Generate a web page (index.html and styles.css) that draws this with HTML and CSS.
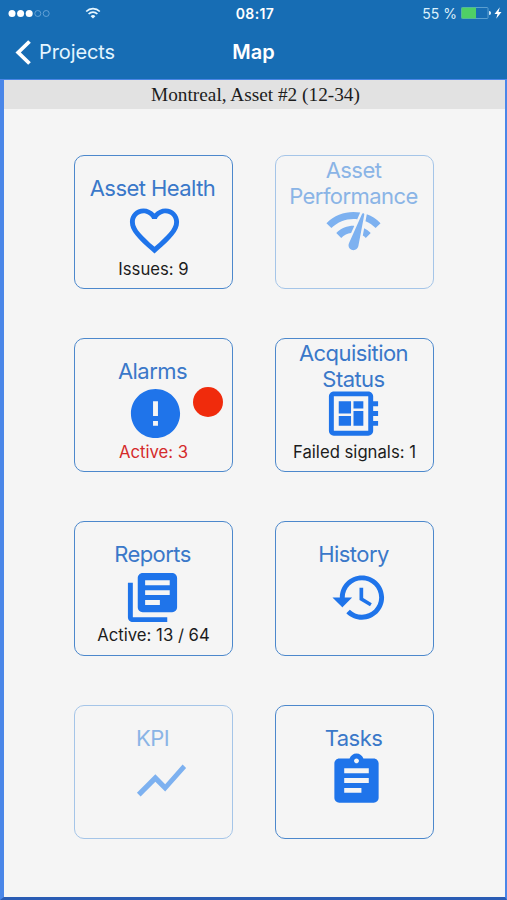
FILE: index.html
```html
<!DOCTYPE html>
<html lang="en">
<head>
    <meta charset="UTF-8">
    <meta name="viewport" content="width=device-width, initial-scale=1.0">
    <title>Map</title>
    <link rel="stylesheet" href="styles.css">
</head>
<body>
    <header>
        <div class="status-bar">
            <div class="status-left">
                <svg class="signal" viewBox="0 0 42 9" width="42" height="9">
                    <circle cx="4" cy="4.5" r="3.5" fill="#fff"/>
                    <circle cx="12.6" cy="4.5" r="3.5" fill="#fff"/>
                    <circle cx="21.2" cy="4.5" r="3.5" fill="#fff"/>
                    <circle cx="29.8" cy="4.5" r="3" fill="none" stroke="#6ba6d8" stroke-width="0.9"/>
                    <circle cx="38.2" cy="4.5" r="3" fill="none" stroke="#6ba6d8" stroke-width="0.9"/>
                </svg>
                <svg class="wifi" viewBox="0 0 16 12" width="16" height="12">
                    <path d="M1.2 4.5a9.6 9.6 0 0 1 13.6 0M3.6 7a6.2 6.2 0 0 1 8.8 0" fill="none" stroke="#e6f6ff" stroke-width="1.7"/>
                    <path d="M8 11.6L5.6 9.2a3.4 3.4 0 0 1 4.8 0z" fill="#e6f6ff"/>
                </svg>
            </div>
            <div class="clock">08:17</div>
            <div class="status-right">
                <span class="percent">55 %</span>
                <svg viewBox="0 0 42 14" width="42" height="14">
                    <rect x="0.5" y="1.5" width="26.5" height="11" rx="1" fill="none" stroke="#5b9fd0"/>
                    <rect x="0.5" y="1.5" width="14.5" height="11" fill="#4fcf66"/>
                    <path d="M28 5c1.6 0 2 1 2 2s-.4 2-2 2z" fill="#cfe6f7"/>
                    <path d="M38.8 1.2l-5.3 6.7h3l-1.3 4.9 5.3-6.9h-3z" fill="#fff"/>
                </svg>
            </div>
        </div>
        <div class="navbar">
            <a class="back">
                <svg viewBox="0 0 16 25" width="16" height="25">
                    <path d="M14.5 1.5L3.2 12.5l11.3 11" fill="none" stroke="#fff" stroke-width="3.8"/>
                </svg>
                <span>Projects</span>
            </a>
            <h1>Map</h1>
        </div>
    </header>

    <main>
        <div class="asset-name">Montreal, Asset #2 (12-34)</div>

        <div class="tiles">
            <a class="tile">
                <div class="title">Asset Health</div>
                <svg class="icon icon-health" viewBox="0 0 24 24"><path d="M16.5 3c-1.74 0-3.41.81-4.5 2.09C10.91 3.81 9.24 3 7.5 3 4.42 3 2 5.42 2 8.5c0 3.78 3.4 6.86 8.55 11.54L12 21.35l1.45-1.32C18.6 15.36 22 12.28 22 8.5 22 5.42 19.58 3 16.5 3zm-4.4 15.55l-.1.1-.1-.1C7.14 14.24 4 11.39 4 8.5 4 6.5 5.5 5 7.5 5c1.54 0 3.04.99 3.57 2.36h1.87C13.46 5.99 14.96 5 16.5 5c2 0 3.5 1.5 3.5 3.5 0 2.89-3.14 5.74-7.9 10.05z"/></svg>
                <div class="info">Issues: 9</div>
            </a>

            <a class="tile disabled">
                <div class="title two-lines">Asset<br>Performance</div>
                <svg class="icon icon-performance" viewBox="0 0 24 24"><path d="M15.9 5c-.17 0-.32.09-.41.23l-.07.15-5.18 11.65c-.16.29-.26.61-.26.96 0 1.11.9 2.01 2.01 2.01.96 0 1.77-.68 1.96-1.59l.01-.03L16.4 5.5c0-.28-.22-.5-.5-.5zM1 9l2 2c2.88-2.88 6.79-4.08 10.53-3.62l1.19-2.68C9.89 3.84 4.74 5.27 1 9zm20 2l2-2c-1.64-1.64-3.55-2.82-5.59-3.57l-.53 2.82c1.5.62 2.9 1.53 4.12 2.75zm-4 4l2-2c-.8-.8-1.7-1.42-2.66-1.89l-.55 2.92c.42.27.83.59 1.21.97zM5 13l2 2c1.13-1.13 2.56-1.79 4.03-2l1.28-2.88c-2.63-.08-5.3.87-7.31 2.88z"/></svg>
            </a>

            <a class="tile">
                <div class="title">Alarms</div>
                <svg class="icon icon-alarms" viewBox="0 0 24 24"><path d="M12 2C6.48 2 2 6.48 2 12s4.48 10 10 10 10-4.48 10-10S17.52 2 12 2zm1 15h-2v-2h2v2zm0-4h-2V7h2v6z"/></svg>
                <div class="info alert">Active: 3</div>
                <span class="badge"></span>
            </a>

            <a class="tile">
                <div class="title two-lines">Acquisition<br>Status</div>
                <svg class="icon icon-status" viewBox="0 0 24 24"><path d="M22 9V7h-2V5c0-1.1-.9-2-2-2H4c-1.1 0-2 .9-2 2v14c0 1.1.9 2 2 2h14c1.1 0 2-.9 2-2v-2h2v-2h-2v-2h2v-2h-2V9h2zm-4 10H4V5h14v14zM6 13h5v4H6zm6-6h4v3h-4zM6 7h5v5H6zm6 4h4v6h-4z"/></svg>
                <div class="info">Failed signals: 1</div>
            </a>

            <a class="tile">
                <div class="title">Reports</div>
                <svg class="icon icon-reports" viewBox="0 0 24 24"><path d="M4 6H2v14c0 1.1.9 2 2 2h14v-2H4V6zm16-4H8c-1.1 0-2 .9-2 2v12c0 1.1.9 2 2 2h12c1.1 0 2-.9 2-2V4c0-1.1-.9-2-2-2zm-1 9H9V9h10v2zm-4 4H9v-2h6v2zm4-8H9V5h10v2z"/></svg>
                <div class="info">Active: 13 / 64</div>
            </a>

            <a class="tile">
                <div class="title">History</div>
                <svg class="icon icon-history" viewBox="0 0 24 24"><path d="M13 3c-4.97 0-9 4.03-9 9H1l3.89 3.89.07.14L9 12H6c0-3.87 3.13-7 7-7s7 3.13 7 7-3.13 7-7 7c-1.93 0-3.68-.79-4.94-2.06l-1.42 1.42C8.27 19.99 10.51 21 13 21c4.97 0 9-4.03 9-9s-4.03-9-9-9zm-1 5v5l4.28 2.54.72-1.21-3.5-2.08V8H12z"/></svg>
            </a>

            <a class="tile disabled">
                <div class="title">KPI</div>
                <svg class="icon icon-kpi" viewBox="0 0 24 24"><path d="M3.5 18.49l6-6.01 4 4L22 6.92l-1.41-1.41-7.09 7.97-4-4L2 16.99z"/></svg>
            </a>

            <a class="tile">
                <div class="title">Tasks</div>
                <svg class="icon icon-tasks" viewBox="0 0 24 24"><path d="M19 3h-4.18C14.4 1.84 13.3 1 12 1c-1.3 0-2.4.84-2.82 2H5c-1.1 0-2 .9-2 2v14c0 1.1.9 2 2 2h14c1.1 0 2-.9 2-2V5c0-1.1-.9-2-2-2zm-7 0c.55 0 1 .45 1 1s-.45 1-1 1-1-.45-1-1 .45-1 1-1zm2 14H7v-2h7v2zm3-4H7v-2h10v2zm0-4H7V7h10v2z"/></svg>
            </a>
        </div>
    </main>
</body>
</html>
```
FILE: styles.css
```css
* {
    box-sizing: border-box;
}

body {
    margin: 0;
    height: 900px;
    display: flex;
    flex-direction: column;
    overflow: hidden;
    background-color: #f5f5f5;
    font-family: Inter, "Liberation Sans", sans-serif;
}

header {
    height: 79px;
    background-color: #176db4;
    color: #fff;
}

.status-bar,
.navbar {
    display: grid;
    grid-template-columns: 1fr auto 1fr;
    align-items: center;
}

.status-bar {
    height: 26px;
    padding: 0 4px 0 8px;
}

.status-left {
    display: flex;
    align-items: center;
    gap: 35px;
}

.clock {
    font-size: 14px;
    font-weight: 600;
    letter-spacing: 0.4px;
    margin-right: 1px;
}

.status-right {
    display: flex;
    align-items: center;
    justify-content: flex-end;
    gap: 4px;
}

.percent {
    font-size: 14px;
    color: #dcf0fb;
}

.navbar {
    height: 52px;
    padding: 0 15px;
}

.back {
    display: flex;
    align-items: center;
    gap: 8px;
    font-size: 20px;
    letter-spacing: -0.1px;
    color: #e3f5ff;
}

h1 {
    margin: 0;
    font-size: 20px;
    font-weight: 600;
}

main {
    flex: 1;
    border: solid #4a86e8;
    border-width: 1px 2px 3px 4px;
    border-bottom-color: #2a5cb4;
}

.asset-name {
    height: 29px;
    line-height: 30px;
    padding-left: 2px;
    background-color: #e2e2e2;
    color: #1c1c1c;
    font-family: "Liberation Serif", serif;
    font-size: 19.3px;
    text-align: center;
}

.tiles {
    display: grid;
    grid-template-columns: 159px 159px;
    grid-auto-rows: 134.5px;
    gap: 48.9px 42px;
    padding: 45.6px 0 0 70px;
}

.tile {
    position: relative;
    display: flex;
    flex-direction: column;
    align-items: center;
    border: 1px solid #4c88cc;
    border-radius: 10px;
}

.title {
    height: 45.5px;
    padding: 19px 2px 0 0;
    color: #3a78c9;
    font-size: 22px;
    letter-spacing: -0.55px;
    line-height: 26px;
    text-align: center;
    white-space: nowrap;
}

.title.two-lines {
    padding-top: 1px;
}

.icon {
    flex: none;
    width: 59px;
    height: 59px;
    fill: #1f74ea;
}

.icon-health { margin-left: 1px; }
.icon-performance { margin-left: -3px; }
.icon-alarms { margin-left: 3px; }
.icon-status { margin-left: -3px; }
.icon-reports { margin-left: -2px; }
.icon-history { margin-left: 10px; }
.icon-kpi { margin-left: 16px; }
.icon-tasks { margin-left: 3px; }

.info {
    margin-top: -1.5px;
    color: #1c1c1c;
    font-size: 16.7px;
    line-height: 20px;
    white-space: nowrap;
}

.info.alert {
    color: #d42a2a;
}

.badge {
    position: absolute;
    top: 48px;
    right: 9px;
    width: 30px;
    height: 30px;
    border-radius: 50%;
    background-color: #f02b0c;
}

.disabled {
    border-color: #a5c5e8;
}

.disabled .title {
    color: #8ab4e6;
}

.disabled .icon {
    fill: #7db1f0;
}
```
